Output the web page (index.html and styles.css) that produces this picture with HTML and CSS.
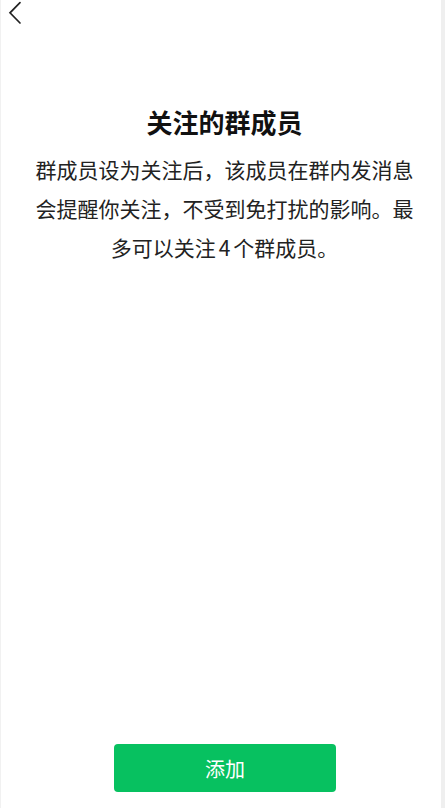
FILE: index.html
```html
<!DOCTYPE html>
<html lang="zh-CN">
<head>
<meta charset="utf-8">
<title>关注的群成员</title>
<link rel="stylesheet" href="styles.css">
</head>
<body>
<div class="page">
  <div class="nav">
    <svg class="back" width="24" height="26" viewBox="0 0 24 26" aria-label="返回">
      <path d="M19 2.6 L9 12.8 L19 23" fill="none" stroke="#222" stroke-width="1.7" stroke-linecap="round" stroke-linejoin="miter"/>
    </svg>
  </div>
  <div class="content">
    <h1 class="title">关注的群成员</h1>
    <p class="desc">群成员设为关注后，该成员在群内发消息会提醒你关注，不受到免打扰的影响。最多可以关注<span class="num">4</span>个群成员。</p>
  </div>
  <div class="footer">
    <button class="btn">添加</button>
  </div>
</div>
</body>
</html>
```
FILE: styles.css
```css
html, body {
  margin: 0;
  padding: 0;
  background: #ffffff;
}
body {
  font-family: "Noto Sans CJK SC", "Noto Sans", sans-serif;
}
.page {
  box-sizing: border-box;
  width: 445px;
  height: 808px;
  border-left: 1px solid #f1f1f1;
  border-right: 4px solid #efefef;
  display: flex;
  flex-direction: column;
  background: #ffffff;
}
.nav {
  height: 40px;
  display: flex;
  align-items: flex-start;
}
.back {
  display: block;
}
.content {
  padding: 0 27px 0 34px;
}
.title {
  margin: 64px 0 0;
  font-size: 26px;
  line-height: 36px;
  font-weight: 700;
  color: #111111;
  text-align: center;
}
.desc {
  margin: 10px 0 0;
  font-size: 21px;
  line-height: 39px;
  color: #222222;
  text-align: center;
}
.num {
  margin: 0 3px;
}
.footer {
  margin-top: auto;
  padding: 0 0 16px 8px;
  display: flex;
  justify-content: center;
}
.btn {
  width: 222px;
  height: 48px;
  border: none;
  border-radius: 4px;
  background: #07c160;
  color: #ffffff;
  font-family: "Noto Sans CJK SC", "Noto Sans", sans-serif;
  font-size: 20px;
  padding: 0;
}
```
